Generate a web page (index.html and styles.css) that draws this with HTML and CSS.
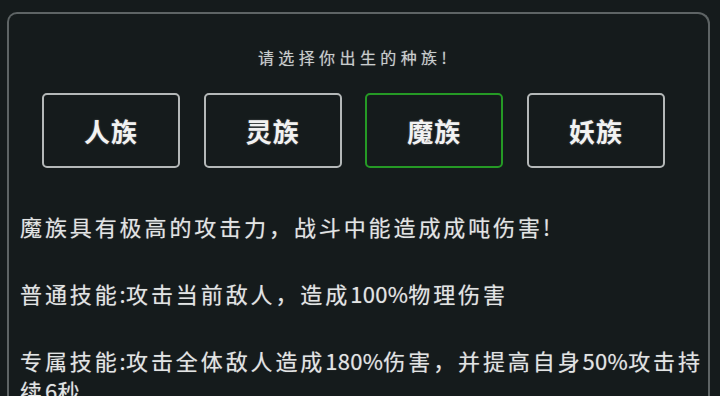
FILE: index.html
```html
<!DOCTYPE html>
<html lang="zh">
<head>
<meta charset="utf-8">
<link rel="stylesheet" href="styles.css">
</head>
<body>
<div class="frame">
  <div class="title">请选择你出生的种族!</div>
  <div class="races">
    <div class="race">人族</div>
    <div class="race">灵族</div>
    <div class="race active">魔族</div>
    <div class="race">妖族</div>
  </div>
  <div class="desc">
    <p>魔族具有极高的攻击力，战斗中能造成成吨伤害<span class="n">!</span></p>
    <p>普通技能<span class="n">:</span>攻击当前敌人，造成<span class="n">100%</span>物理伤害</p>
    <p>专属技能<span class="n">:</span>攻击全体敌人造成<span class="n">180%</span>伤害，并提高自身<span class="n">50%</span>攻击持<br>续<span class="n">6</span>秒</p>
  </div>
</div>
</body>
</html>
```
FILE: styles.css
```css
html, body {
  margin: 0;
  padding: 0;
  background: #151b1c;
  overflow: hidden;
  width: 720px;
  height: 396px;
}
body {
  font-family: "Noto Sans CJK SC", "DejaVu Sans", sans-serif;
  color: #e4e6e6;
}
.frame {
  margin: 12px 0 0 7px;
  width: 703px;
  height: 420px;
  border: 2px solid #5e6465;
  border-bottom: none;
  border-radius: 10px 12px 0 0;
  padding-top: 33px;
  box-sizing: border-box;
}
.title {
  text-align: center;
  font-size: 16px;
  line-height: 20px;
  letter-spacing: 4.4px;
  color: #c9cdcd;
  padding-left: 4px;
  margin-right: 12px;
  text-shadow: 0 0 1px rgba(255,255,255,0.4);
}
.races {
  display: flex;
  gap: 23.7px;
  margin-top: 26px;
  padding-left: 33px;
}
.race {
  width: 138px;
  height: 75px;
  box-sizing: border-box;
  border: 2px solid #b4b8b8;
  border-radius: 5px;
  display: flex;
  align-items: center;
  justify-content: center;
  font-size: 26px;
  font-weight: 700;
  color: #f2f2f2;
  letter-spacing: 1px;
  text-shadow: 0 0 2px rgba(255,255,255,0.35);
}
.race.active {
  border-color: #259a25;
}
.desc {
  margin-top: 43px;
  padding-left: 11px;
}
.desc p {
  margin: 0 0 37px 0;
  font-size: 22px;
  line-height: 30px;
  letter-spacing: 2.9px;
  white-space: nowrap;
  color: #e2e4e4;
  text-shadow: 0 0 1px rgba(255,255,255,0.4);
}
.desc .n {
  letter-spacing: 0.3px;
}
```
